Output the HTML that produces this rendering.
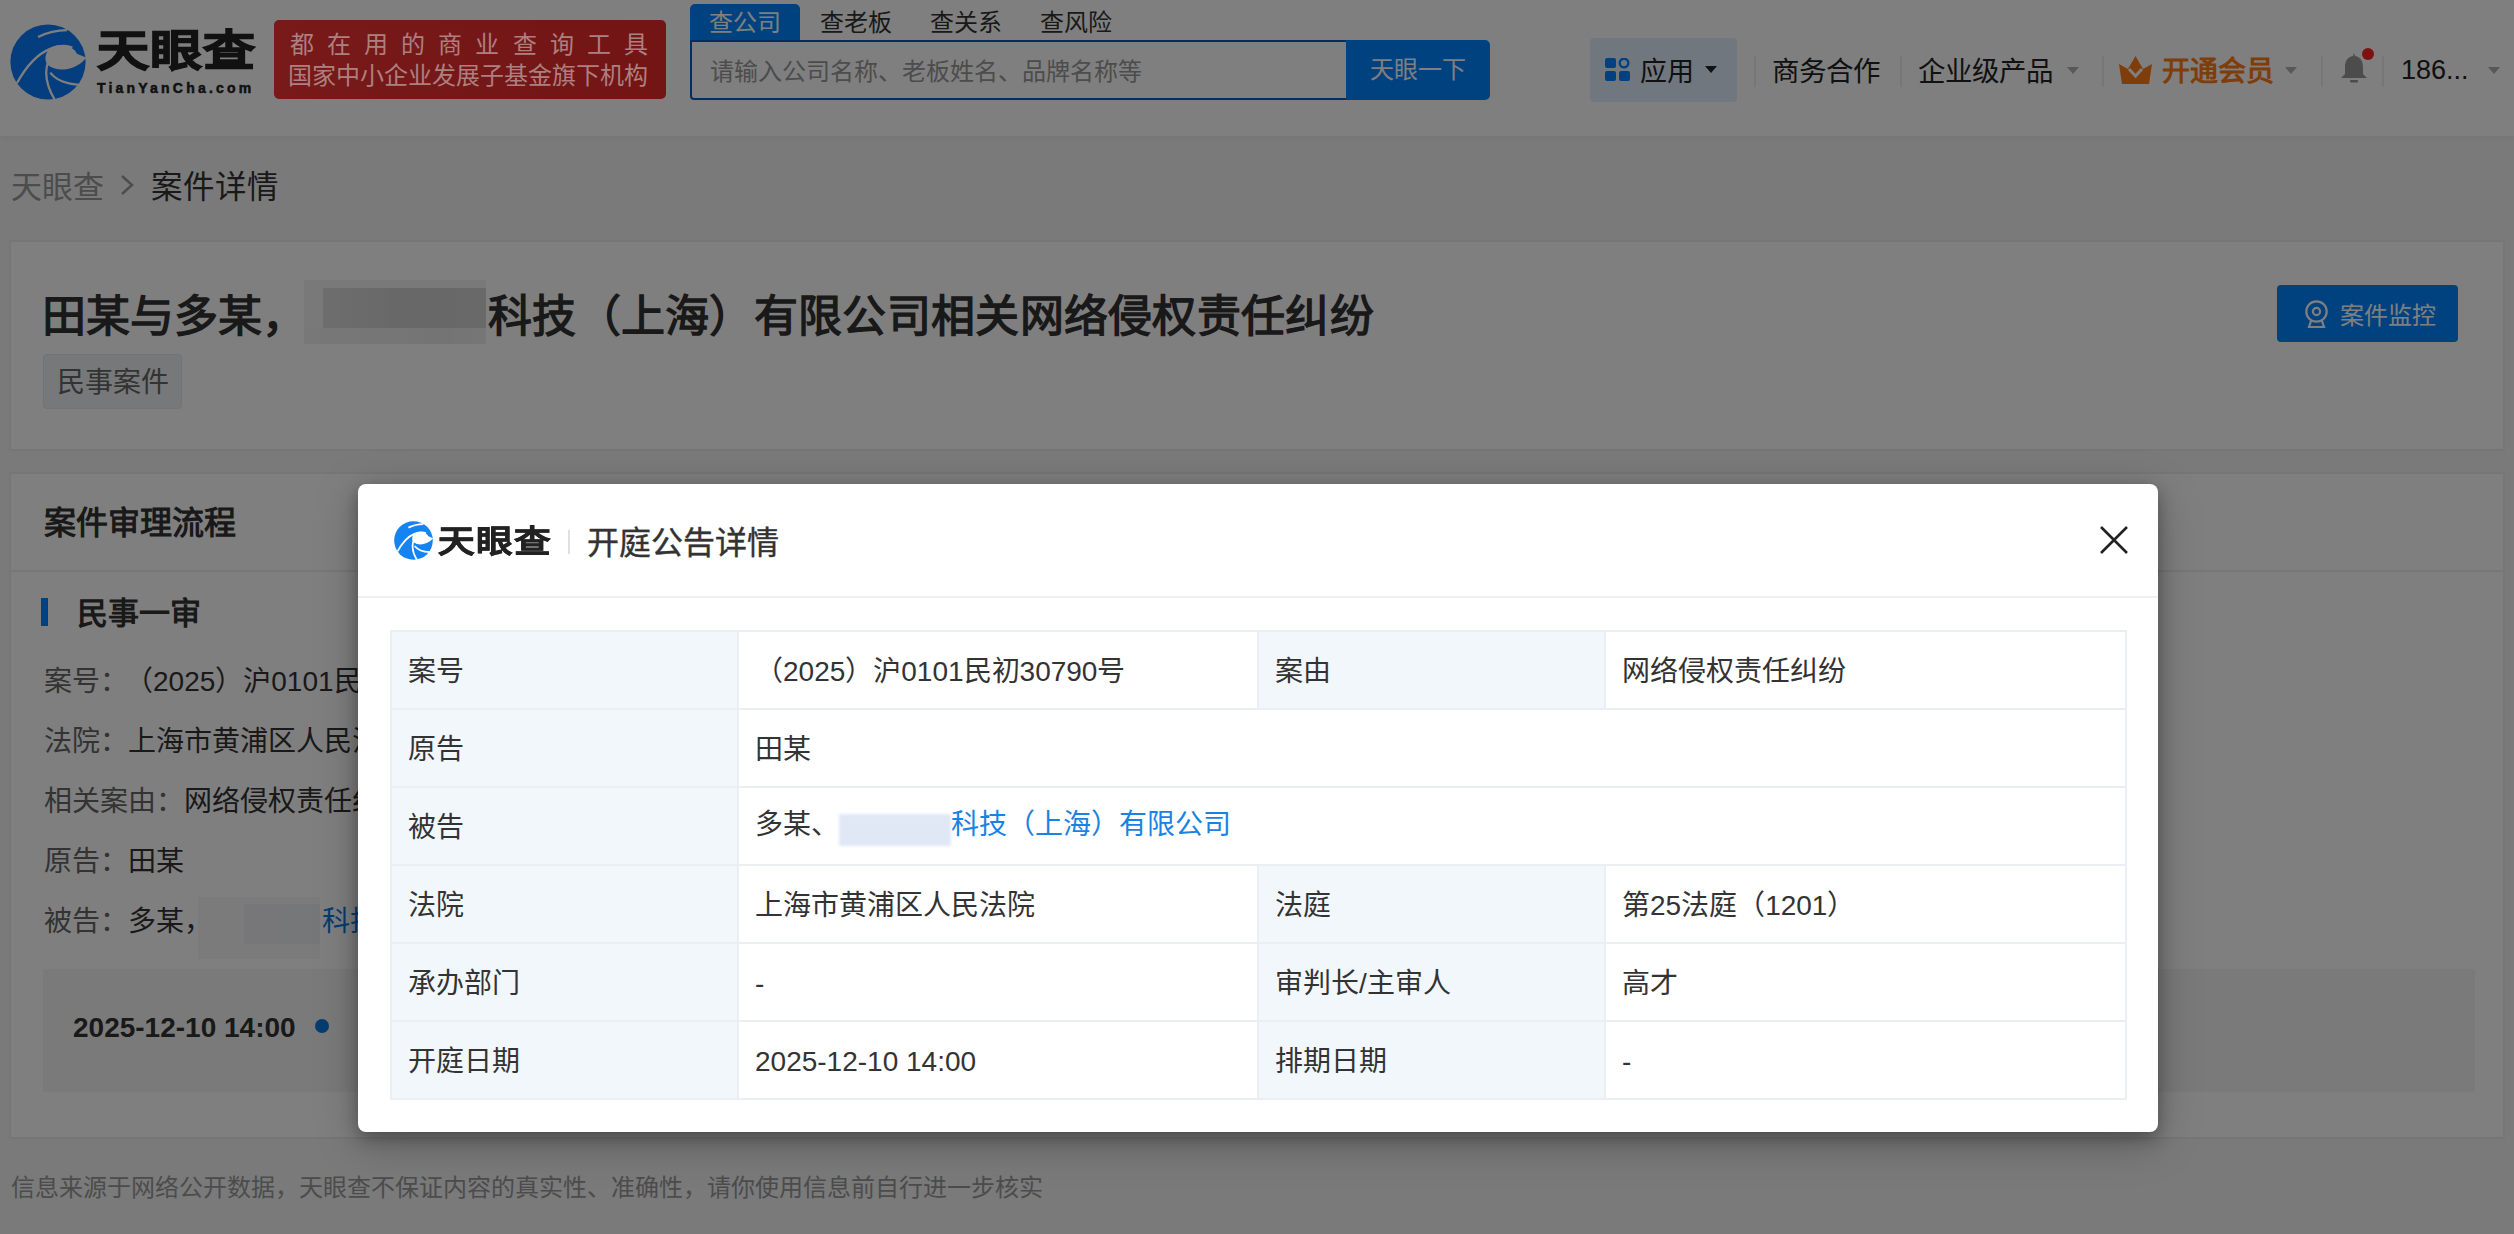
<!DOCTYPE html>
<html lang="zh-CN"><head><meta charset="utf-8">
<style>
*{box-sizing:border-box;margin:0;padding:0}
html,body{width:2514px;height:1234px;overflow:hidden}
body{position:relative;background:#f4f4f4;font-family:"Liberation Sans",sans-serif;color:#333}
.abs{position:absolute;white-space:nowrap;line-height:1}
.hdr{position:absolute;left:0;top:0;width:2514px;height:136px;background:#fff;box-shadow:0 1px 6px rgba(0,0,0,.06)}
.card{position:absolute;left:9px;width:2496px;background:#fff;border:2px solid #ececec}
.mask{position:absolute;left:0;top:0;width:2514px;height:1234px;background:rgba(0,0,0,.5)}
.modal{position:absolute;left:358px;top:484px;width:1800px;height:648px;background:#fff;border-radius:8px;box-shadow:0 6px 16px rgba(0,0,0,.28),0 10px 44px rgba(0,0,0,.25)}
table{border-collapse:collapse;position:absolute;left:32px;top:146px;width:1735px;table-layout:fixed}
td{border:2px solid #ebeef2;height:78px;font-size:28px;line-height:1;color:#333;padding:4px 0 0 16px;vertical-align:middle;white-space:nowrap}
td.l{background:#f2f7fc}
.sep{position:absolute;width:2px;background:#efefef}
.caret{position:absolute;width:0;height:0;border-left:6.5px solid transparent;border-right:6.5px solid transparent;border-top:7px solid #333}
.row{font-size:28px;color:#666}
.row b{font-weight:normal;color:#333}
</style></head><body>

<div class="hdr">
  <svg class="abs" style="left:10px;top:24px" width="76" height="76" viewBox="0 0 100 100">
    <circle cx="50" cy="50" r="49.5" fill="#0a7cff"/>
    <path d="M52 33 C45 40 45 50 51 55 C62 63 84 62 98 47 L100 44 L88 39 C82 27 62 24 52 33 Z" fill="#fff"/>
    <path d="M9 78 C20 58 35 40 52 33 C62 29 72 27 82 31" stroke="#fff" stroke-width="3" fill="none"/>
    <path d="M37 17 C49 11 62 8 75 8" stroke="#fff" stroke-width="3" fill="none"/>
    <path d="M50 50 C46 62 47 80 59 100" stroke="#fff" stroke-width="3" fill="none"/>
    <path d="M53 64 C60 73 72 79 92 80" stroke="#fff" stroke-width="3" fill="none"/>
  </svg>
  <div class="abs" style="left:97px;top:30px;font-size:43px;font-weight:900;color:#222;letter-spacing:1px;-webkit-text-stroke:1.4px #222;transform:scaleX(1.21);transform-origin:0 0">天眼查</div>
  <div class="abs" style="left:97px;top:81px;font-size:14px;font-weight:bold;color:#222;letter-spacing:3.2px;-webkit-text-stroke:0.5px #222">TianYanCha.com</div>
  <div class="abs" style="left:274px;top:20px;width:392px;height:79px;border-radius:5px;background:linear-gradient(90deg,#f03434,#e82a2a)"></div>
  
  

  <div class="abs" style="left:690px;top:4px;width:110px;height:37px;border-radius:5px 5px 0 0;background:#0084ff"></div>
  <div class="abs" style="left:709px;top:11px;font-size:24px;color:#fff">查公司</div>
  <div class="abs" style="left:820px;top:11px;font-size:24px;color:#333">查老板</div>
  <div class="abs" style="left:930px;top:11px;font-size:24px;color:#333">查关系</div>
  <div class="abs" style="left:1040px;top:11px;font-size:24px;color:#333">查风险</div>
  <div class="abs" style="left:690px;top:40px;width:700px;height:60px;border:2px solid #0a5cc0;border-radius:0 0 0 4px;background:#fff"></div>
  <div class="abs" style="left:710px;top:60px;font-size:24px;color:#999">请输入公司名称、老板姓名、品牌名称等</div>
  <div class="abs" style="left:1346px;top:40px;width:144px;height:60px;border-radius:0 5px 5px 0;background:#0084ff"></div>
  <div class="abs" style="left:1370px;top:58px;font-size:24px;color:#fff">天眼一下</div>

  <div class="abs" style="left:1590px;top:38px;width:147px;height:64px;border-radius:4px;background:#e2eeff"></div>
  <svg class="abs" style="left:1605px;top:58px" width="25" height="23" viewBox="0 0 25 23">
    <rect x="0" y="0" width="11" height="10" rx="2" fill="#0084ff"/>
    <circle cx="19" cy="5" r="4.3" fill="none" stroke="#0084ff" stroke-width="2.4"/>
    <rect x="0" y="13" width="11" height="10" rx="2" fill="#0084ff"/>
    <rect x="14" y="13" width="11" height="10" rx="2" fill="#0084ff"/>
  </svg>
  <div class="abs" style="left:1640px;top:59px;font-size:27px;font-weight:500;color:#222">应用</div>
  <div class="caret" style="left:1705px;top:66px;border-top-color:#222"></div>
  <div class="sep" style="left:1754px;top:56px;height:31px"></div>
  <div class="abs" style="left:1772px;top:58px;font-size:27.5px;color:#222">商务合作</div>
  <div class="sep" style="left:1900px;top:56px;height:31px"></div>
  <div class="abs" style="left:1918px;top:58px;font-size:27.5px;color:#222">企业级产品</div>
  <div class="caret" style="left:2067px;top:67px;border-top-color:#b0b0b0"></div>
  <div class="sep" style="left:2102px;top:56px;height:31px"></div>
  <svg class="abs" style="left:2119px;top:56px" width="33" height="28" viewBox="0 0 33 28">
    <path d="M0 8 L9 13 L16.5 0 L24 13 L33 8 L30 28 L3 28 Z" fill="#ff7a14"/>
    <path d="M10 13 L16.5 20 L23 13" stroke="#fff" stroke-width="3" fill="none"/>
  </svg>
  <div class="abs" style="left:2162px;top:58px;font-size:28px;font-weight:bold;color:#ff7a14">开通会员</div>
  <div class="caret" style="left:2285px;top:67px;border-top-color:#b0b0b0"></div>
  <div class="sep" style="left:2321px;top:56px;height:31px"></div>
  <svg class="abs" style="left:2339px;top:52px" width="30" height="32" viewBox="0 0 30 32">
    <path d="M15 1 C15 1 16 4 16 4 C22 5 24 10 24 15 L24 22 L28 26 L2 26 L6 22 L6 15 C6 10 8 5 14 4 Z" fill="#999"/>
    <rect x="11" y="28" width="8" height="2.5" rx="1" fill="#999"/>
  </svg>
  <div class="abs" style="left:2362px;top:48px;width:12px;height:12px;border-radius:50%;background:#ff2020"></div>
  <div class="sep" style="left:2382px;top:56px;height:31px"></div>
  <div class="abs" style="left:2401px;top:57px;font-size:27px;color:#222">186...</div>
  <div class="caret" style="left:2488px;top:67px;border-top-color:#b0b0b0"></div>
</div>

<div class="abs" style="left:11px;top:172px;font-size:31px;color:#999">天眼查</div>
<svg class="abs" style="left:119px;top:174px" width="16" height="22" viewBox="0 0 16 22"><path d="M3 2 L13 11 L3 20" stroke="#999" stroke-width="2.4" fill="none"/></svg>
<div class="abs" style="left:151px;top:172px;font-size:31.5px;color:#333">案件详情</div>

<div class="card" style="top:240px;height:211px">
  <div class="abs" style="left:31px;top:53px;font-size:44px;font-weight:bold;color:#333">田某与多某，</div>
  <div class="abs" style="left:293px;top:38px;width:182px;height:64px;background:#f2f2f2"></div>
  <div class="abs" style="left:312px;top:46px;width:163px;height:40px;background:linear-gradient(90deg,#dcdcdc 0,#d6d6d6 25%,#d0d0d0 45%,#d2d2d2 100%)"></div>
  <div class="abs" style="left:293px;top:86px;width:182px;height:16px;background:linear-gradient(90deg,#f0f0f0,#ececec 50%,#e8e8e8 75%,#ededed)"></div>
  <div class="abs" style="left:477px;top:53px;font-size:44px;font-weight:bold;color:#333;letter-spacing:0.3px">科技（上海）有限公司相关网络侵权责任纠纷</div>
  <div class="abs" style="left:32px;top:112px;width:139px;height:55px;border-radius:4px;background:#eef1f5;border:1px solid #e2e6ea"></div>
  <div class="abs" style="left:46px;top:127px;font-size:28px;color:#666">民事案件</div>
  <div class="abs" style="left:2266px;top:43px;width:181px;height:57px;border-radius:4px;background:#0084ff"></div>
  <svg class="abs" style="left:2293px;top:58px" width="25" height="29" viewBox="0 0 25 29">
    <circle cx="12.5" cy="11.5" r="10.2" fill="none" stroke="#fff" stroke-width="2.2"/>
    <circle cx="12.5" cy="11.5" r="3.6" fill="none" stroke="#fff" stroke-width="2.2"/>
    <path d="M7 21 L5 27 L20 27 L18 21" fill="none" stroke="#fff" stroke-width="2.2"/>
  </svg>
  <div class="abs" style="left:2329px;top:62px;font-size:24px;color:#fff">案件监控</div>
</div>

<div class="card" style="top:472px;height:667px">
  <div class="abs" style="left:33px;top:33px;font-size:32px;font-weight:bold;color:#333">案件审理流程</div>
  <div class="abs" style="left:0;top:96px;width:2492px;height:2px;background:#eeeeee"></div>
  <div class="abs" style="left:30px;top:124px;width:7px;height:28px;background:#0084ff"></div>
  <div class="abs" style="left:66px;top:124px;font-size:31px;font-weight:bold;color:#333">民事一审</div>
  <div class="abs row" style="left:33px;top:194px">案号：<b style="margin-left:11px">（2025）沪0101民初30790号</b></div>
  <div class="abs row" style="left:33px;top:254px">法院：<b>上海市黄浦区人民法院</b></div>
  <div class="abs row" style="left:33px;top:314px">相关案由：<b>网络侵权责任纠纷</b></div>
  <div class="abs row" style="left:33px;top:374px">原告：<b>田某</b></div>
  <div class="abs row" style="left:33px;top:434px">被告：<b>多某，</b></div>
  <div class="abs" style="left:187px;top:423px;width:122px;height:62px;background:#f6f6f9"></div>
  <div class="abs" style="left:233px;top:430px;width:76px;height:40px;background:linear-gradient(90deg,#efeff4,#eceef2)"></div>
  <div class="abs" style="left:311px;top:434px;font-size:28px;color:#0a7ae0">科技（上海）有限公司</div>
  <div class="abs" style="left:32px;top:495px;width:2432px;height:123px;background:#f5f5f5"></div>
  <div class="abs" style="left:62px;top:540px;font-size:28px;font-weight:bold;color:#333">2025-12-10 14:00</div>
  <div class="abs" style="left:304px;top:545px;width:14px;height:14px;border-radius:50%;background:#0a7ae0"></div>
</div>

<div class="abs" style="left:11px;top:1176px;font-size:24px;color:#999">信息来源于网络公开数据，天眼查不保证内容的真实性、准确性，请你使用信息前自行进一步核实</div>

<div class="mask"></div>
<div class="abs" style="left:290px;top:33px;font-size:24px;color:rgb(172,128,128);letter-spacing:13.1px">都在用的商业查询工具</div>
<div class="abs" style="left:288px;top:64px;font-size:24px;color:rgb(172,128,128)">国家中小企业发展子基金旗下机构</div>

<div class="modal">
  <svg class="abs" style="left:36px;top:37px" width="39" height="39" viewBox="0 0 100 100">
    <circle cx="50" cy="50" r="49.5" fill="#1683f2"/>
    <path d="M52 33 C45 40 45 50 51 55 C62 63 84 62 98 47 L100 44 L88 39 C82 27 62 24 52 33 Z" fill="#fff"/>
    <path d="M9 78 C20 58 35 40 52 33 C62 29 72 27 82 31" stroke="#fff" stroke-width="4.5" fill="none"/>
    <path d="M37 17 C49 11 62 8 75 8" stroke="#fff" stroke-width="4.5" fill="none"/>
    <path d="M50 50 C46 62 47 80 59 100" stroke="#fff" stroke-width="4.5" fill="none"/>
    <path d="M53 64 C60 73 72 79 92 80" stroke="#fff" stroke-width="4.5" fill="none"/>
  </svg>
  <div class="abs" style="left:80px;top:42px;font-size:31px;font-weight:900;color:#222;letter-spacing:1px;-webkit-text-stroke:0.6px #222;transform:scaleX(1.18);transform-origin:0 0">天眼查</div>
  <div class="abs" style="left:210px;top:46px;width:2px;height:24px;background:#e0e0e0"></div>
  <div class="abs" style="left:229px;top:43px;font-size:32px;font-weight:500;color:#333;-webkit-text-stroke:0.4px #333">开庭公告详情</div>
  <svg class="abs" style="left:1740px;top:40px" width="32" height="32" viewBox="0 0 32 32"><path d="M3 3 L29 29 M29 3 L3 29" stroke="#222" stroke-width="2.6"/></svg>
  <div class="abs" style="left:0;top:112px;width:1800px;height:2px;background:#f0f0f0"></div>
  <table>
    <colgroup><col style="width:347px"><col style="width:520px"><col style="width:347px"><col style="width:521px"></colgroup>
    <tr><td class="l">案号</td><td>（2025）沪0101民初30790号</td><td class="l">案由</td><td>网络侵权责任纠纷</td></tr>
    <tr><td class="l">原告</td><td colspan="3">田某</td></tr>
    <tr><td class="l">被告</td><td colspan="3">多某、<span style="display:inline-block;width:112px;height:32px;vertical-align:-12px;background:#e1e8f5;filter:blur(1.5px)"></span><span style="color:#1a82e0">科技（上海）有限公司</span></td></tr>
    <tr><td class="l">法院</td><td>上海市黄浦区人民法院</td><td class="l">法庭</td><td>第25法庭（1201）</td></tr>
    <tr><td class="l">承办部门</td><td>-</td><td class="l">审判长/主审人</td><td>高才</td></tr>
    <tr><td class="l">开庭日期</td><td>2025-12-10 14:00</td><td class="l">排期日期</td><td>-</td></tr>
  </table>
</div>
</body></html>
